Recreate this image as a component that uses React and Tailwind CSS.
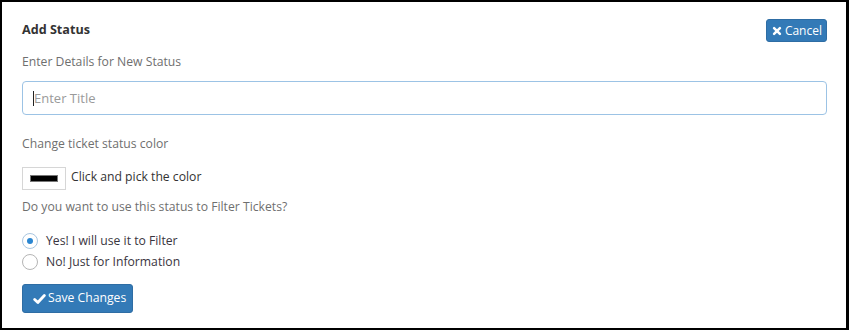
import { useState } from 'react'

function TimesIcon({ className }) {
  return (
    <svg viewBox="0 0 12 12" className={className} fill="none">
      <path d="M2.5 2.5 L9.5 9.5 M9.5 2.5 L2.5 9.5" stroke="currentColor" strokeWidth="3" strokeLinecap="round" />
    </svg>
  )
}

function CheckIcon({ className }) {
  return (
    <svg viewBox="0 0 14 12" className={className} fill="none">
      <path d="M1.8 6.6 L5.2 9.8 L12.2 2.2" stroke="currentColor" strokeWidth="3" strokeLinecap="round" strokeLinejoin="round" />
    </svg>
  )
}

function Radio({ checked, label, onClick }) {
  return (
    <label onClick={onClick} className="flex items-center gap-2 h-[21px] leading-[21px] cursor-pointer">
      <span className={`shrink-0 w-[16px] h-[16px] rounded-full border flex items-center justify-center bg-white ${checked ? 'border-[#a9c6e0]' : 'border-[#b5b5b5]'}`}>
        {checked && <span className="w-[6px] h-[6px] rounded-full bg-[#2a86d1]" />}
      </span>
      <span className="text-[12.2px] text-[#3a3540]">{label}</span>
    </label>
  )
}

export default function App() {
  const [useFilter, setUseFilter] = useState(true)

  return (
    <div className="w-[849px] h-[330px] bg-white border-2 border-r-[3px] border-black font-['Open_Sans',sans-serif] pl-[20px] pr-[19px] pt-[17px]">
      <div className="flex items-center justify-between h-[23px]">
        <h1 className="text-[12.6px] font-bold text-[#333]">Add Status</h1>
        <button className="flex items-center gap-[3px] h-[23px] pl-[5px] pr-[4px] rounded-[3px] bg-[#337ab7] border border-[#2e6da4] text-white text-[12px] whitespace-nowrap">
          <TimesIcon className="w-[10px] h-[10px]" /> Cancel
        </button>
      </div>

      <p className="mt-[11px] h-[18px] leading-[18px] text-[12.2px] text-[#6f6f6f]">Enter Details for New Status</p>

      <div className="relative mt-[10px]">
        <input
          type="text"
          placeholder="Enter Title"
          className="w-full h-[34px] px-[11px] rounded-[4px] border border-[#9cc3e5] text-[13px] text-[#555] placeholder:text-[#9a9a9a] outline-none caret-transparent"
        />
        <span className="absolute left-[11px] top-[10px] w-px h-[15px] bg-[#222]" />
      </div>

      <p className="mt-[20px] h-[18px] leading-[18px] text-[12.2px] text-[#6f6f6f]">Change ticket status color</p>

      <div className="mt-[14px] flex items-center gap-[5px]">
        <div className="w-[44px] h-[23px] border border-[#d6d6d6] flex items-center justify-center">
          <div className="w-[28px] h-[7px] bg-black border border-[#777]" />
        </div>
        <span className="text-[12.2px] text-[#333] -translate-y-px">Click and pick the color</span>
      </div>

      <p className="mt-[8px] h-[18px] leading-[18px] text-[12.2px] text-[#6f6f6f]">Do you want to use this status to Filter Tickets?</p>

      <div className="mt-[14px] flex flex-col">
        <Radio checked={useFilter} label="Yes! I will use it to Filter" onClick={() => setUseFilter(true)} />
        <Radio checked={!useFilter} label="No! Just for Information" onClick={() => setUseFilter(false)} />
      </div>

      <button className="mt-[12px] flex items-center gap-[2px] h-[29px] w-[111px] pl-[10px] pr-[8px] rounded-[3px] bg-[#337ab7] border border-[#2e6da4] text-white text-[12.2px] whitespace-nowrap">
        <CheckIcon className="w-[13px] h-[12px] shrink-0" /> Save Changes
      </button>
    </div>
  )
}
